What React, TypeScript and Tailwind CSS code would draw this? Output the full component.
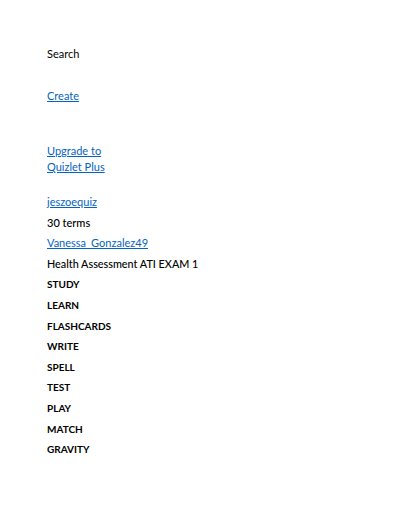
const items = ['STUDY', 'LEARN', 'FLASHCARDS', 'WRITE', 'SPELL', 'TEST', 'PLAY', 'MATCH', 'GRAVITY'];

export default function App() {
  return (
    <div
      className="min-h-[517px] bg-white pl-[47px] pt-[46px] text-[11px] text-black"
      style={{ fontFamily: 'Lato, "Open Sans", sans-serif' }}
    >
      <div className="leading-4">Search</div>
      <a href="#" className="mt-[26px] block leading-4 text-[#0563c1] underline">Create</a>
      <a href="#" className="mt-[39px] block leading-4 text-[#0563c1] underline">
        Upgrade to
        <br />
        Quizlet Plus
      </a>
      <div className="mt-[17px] leading-[20.6px]">
        <a href="#" className="block text-[#0563c1] underline">jeszoequiz</a>
        <div className="font-medium">30 terms</div>
        <a href="#" className="block text-[#0563c1] underline">Vanessa_Gonzalez49</a>
        <div className="text-[10.8px] font-medium">Health Assessment ATI EXAM 1</div>
        {items.map(item => (
          <div key={item} className="text-[10px] font-bold">{item}</div>
        ))}
      </div>
    </div>
  );
}
